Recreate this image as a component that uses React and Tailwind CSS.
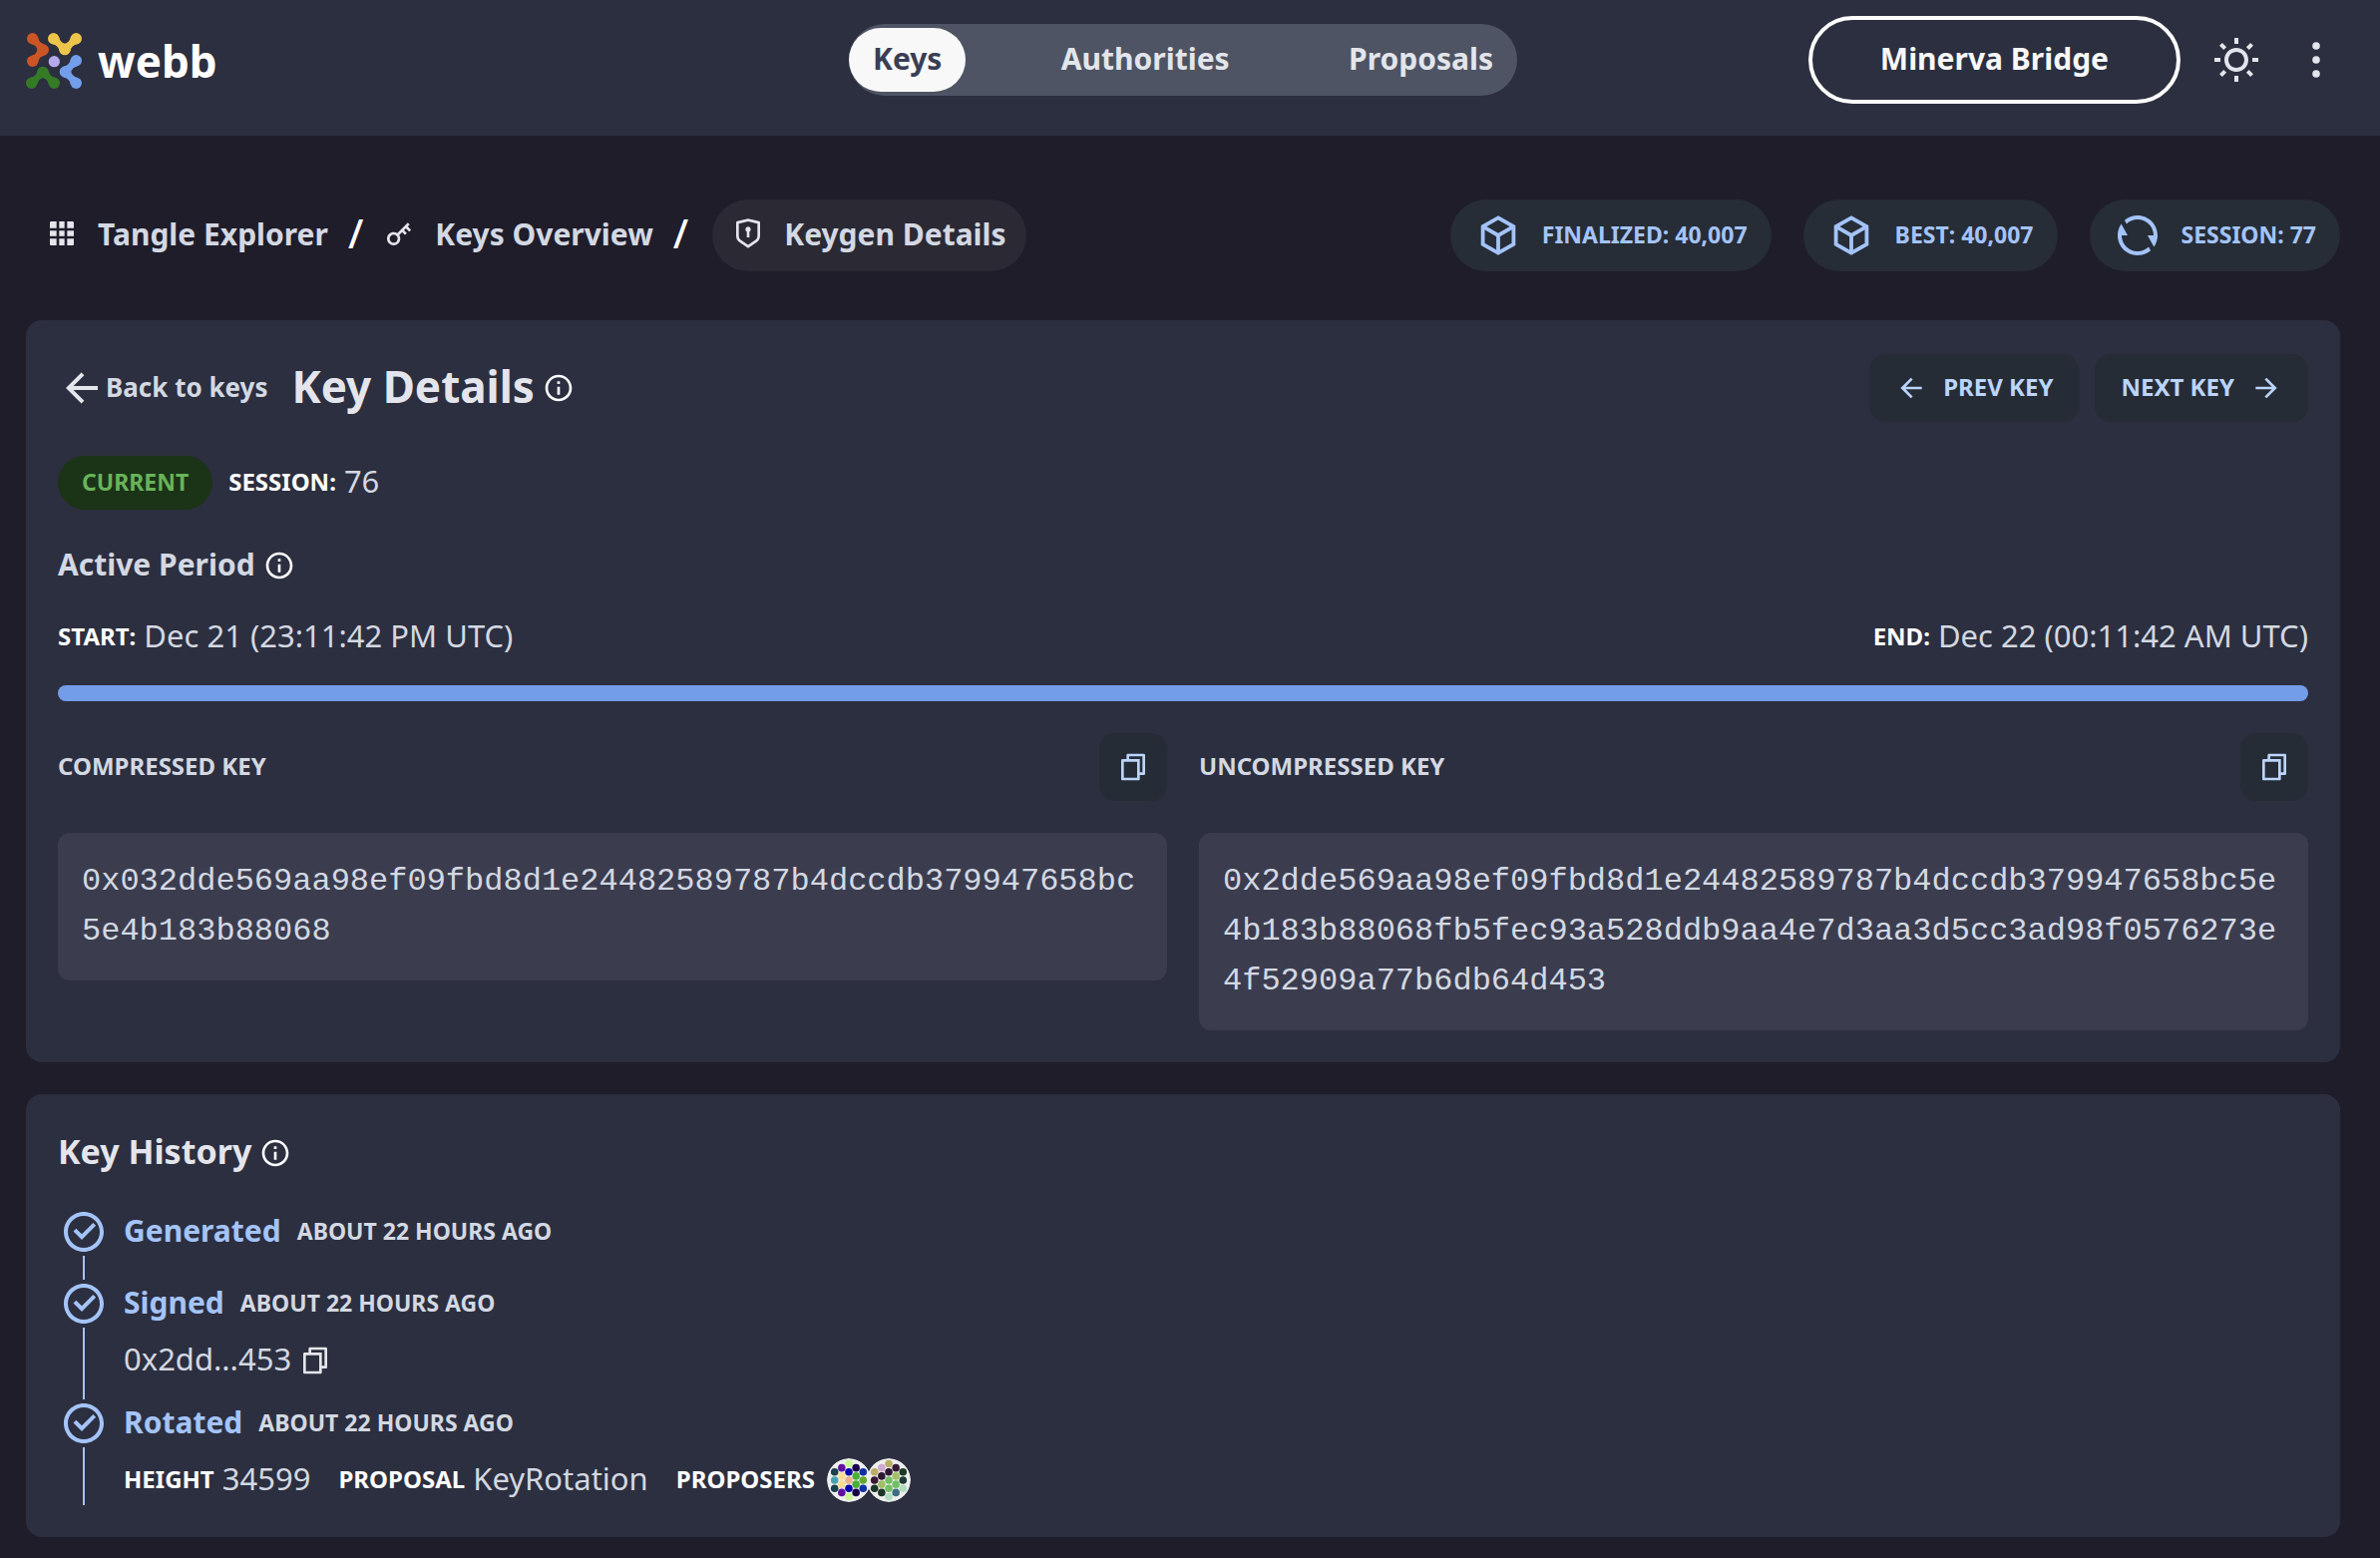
import React from "react";
import {
  RiGridFill,
  RiKey2Line,
  RiShieldKeyholeLine,
  RiRefreshLine,
  RiInformationLine,
  RiArrowLeftLine,
  RiArrowRightLine,
  RiFileCopyLine,
  RiCheckboxCircleLine,
  RiSunLine,
} from "react-icons/ri";

const COMPRESSED = "0x032dde569aa98ef09fbd8d1e24482589787b4dccdb379947658bc5e4b183b88068";
const UNCOMPRESSED =
  "0x2dde569aa98ef09fbd8d1e24482589787b4dccdb379947658bc5e4b183b88068fb5fec93a528ddb9aa4e7d3aa3d5cc3ad98f0576273e4f52909a77b6db64d453";

/* ---------- drawings ---------- */

function neck([ax, ay], [bx, by], r) {
  const d = Math.hypot(bx - ax, by - ay);
  const ux = (bx - ax) / d;
  const uy = (by - ay) / d;
  const nx = -uy;
  const ny = ux;
  const mx = (ax + bx) / 2;
  const my = (ay + by) / 2;
  const at = (x, y, u, n) => `${x + ux * u + nx * n} ${y + uy * u + ny * n}`;
  const u = r * 0.5;
  const n = r * 0.87;
  return `M${at(ax, ay, u, n)} Q${at(mx, my, 0, 4)} ${at(bx, by, -u, n)} L${at(bx, by, -u, -n)} Q${at(mx, my, 0, -4)} ${at(ax, ay, u, -n)} Z`;
}

const LOGO_BLOBS = [
  { fill: "#cc5526", points: [[20, 17], [52, 51], [20, 85]] },
  { fill: "#edc54b", points: [[83, 17], [117, 50], [151, 17]] },
  { fill: "#739ee9", points: [[151, 83], [118, 117], [151, 151]] },
  { fill: "#357b26", points: [[17, 151], [51, 118], [85, 151]] },
];

function LogoMark() {
  return (
    <svg viewBox="0 0 168 168" className="size-14" aria-hidden="true">
      {LOGO_BLOBS.map(({ fill, points }) => (
        <g key={fill} fill={fill}>
          {points.map(([x, y]) => (
            <circle key={`${x}-${y}`} cx={x} cy={y} r="17" />
          ))}
          <path d={neck(points[0], points[1], 17)} />
          <path d={neck(points[1], points[2], 17)} />
        </g>
      ))}
      <circle cx="85" cy="86" r="17" fill="#b5a9ec" />
    </svg>
  );
}

function CubeIcon() {
  return (
    <svg viewBox="0 0 24 24" className="size-12" fill="none" stroke="currentColor" strokeWidth="1.9" aria-hidden="true">
      <path d="M12 3.2 19.7 7.6v8.8L12 20.8 4.3 16.4V7.6Z" />
      <path d="M4.3 7.6 12 12l7.7-4.4M12 12v8.8" />
    </svg>
  );
}

function MoreIcon() {
  return (
    <svg viewBox="0 0 24 24" className="size-12" fill="currentColor" aria-hidden="true">
      <circle cx="12" cy="5" r="1.9" />
      <circle cx="12" cy="12" r="1.9" />
      <circle cx="12" cy="19" r="1.9" />
    </svg>
  );
}

const DOTS = [
  [32, 8], [32, 20], [21.6, 14], [11.2, 20], [21.6, 26], [11.2, 32], [11.2, 44],
  [21.6, 38], [21.6, 50], [32, 56], [32, 44], [42.4, 50], [52.8, 44], [42.4, 38],
  [52.8, 32], [52.8, 20], [42.4, 26], [42.4, 14], [32, 32],
];

const PROPOSERS = [
  ["#c8fb94", "#0606a8", "#5f12a2", "#1b414c", "#f8dc92", "#48a0b0", "#1b414c", "#f8dc92", "#5f12a2", "#c8fb94",
    "#0606a8", "#170047", "#1030a6", "#4bad3a", "#62a930", "#1030a6", "#4bad3a", "#170047", "#f0b08e"],
  ["#b9ae66", "#2d1733", "#d1a8d0", "#b9ae66", "#2d1733", "#361a33", "#1d3527", "#a1bf66", "#1d3527", "#b0dcc0",
    "#72bf64", "#406c82", "#b0dcc0", "#72bf64", "#1d3a35", "#1d3a27", "#a1bf66", "#361a33", "#72bf64"],
];

function Identicon({ colors }) {
  return (
    <svg viewBox="0 0 64 64" className="size-11 rounded-full" aria-hidden="true">
      <circle cx="32" cy="32" r="32" fill="#eeeeee" />
      {DOTS.map(([x, y], i) => (
        <circle key={i} cx={x} cy={y} r="5.5" fill={colors[i]} />
      ))}
    </svg>
  );
}

/* ---------- small parts ---------- */

function Info({ label }) {
  return (
    <button type="button" aria-label={label} className="text-white">
      <RiInformationLine className="size-8" />
    </button>
  );
}

function Field({ label, children }) {
  return (
    <p className="flex items-center gap-2">
      <span className="pb-0.5 text-2xl font-bold text-white">{label}</span>
      <span className="pb-1 text-[31px]">{children}</span>
    </p>
  );
}

function Crumb({ icon: Icon, children, current }) {
  return (
    <a
      href="#"
      aria-current={current ? "page" : undefined}
      className={`flex h-18 items-center gap-5 rounded-full px-5 ${current ? "ml-6 bg-[#2b2934]" : ""}`}
    >
      <Icon className="mb-1 size-8 text-[#e4e6ec]" />
      <span className="pb-1 text-[30px] font-bold">{children}</span>
    </a>
  );
}

function Slash() {
  return <span className="pb-1 text-[40px] leading-none font-medium text-white">/</span>;
}

function Chip({ icon, children }) {
  return (
    <div className="flex h-18 items-center gap-5 rounded-full bg-[#262d37] px-6 text-[23px] font-bold text-[#a4c4f9]">
      {icon}
      <span className="pb-0.5">{children}</span>
    </div>
  );
}

function KeyBlock({ title, value }) {
  return (
    <section>
      <div className="flex items-center justify-between">
        <h3 className="pb-0.5 text-2xl font-bold">{title}</h3>
        <button
          type="button"
          aria-label={`Copy ${title.toLowerCase()}`}
          className="flex size-17 items-center justify-center rounded-2xl bg-[#262c36] text-[#bbd5fd]"
        >
          <RiFileCopyLine className="size-8" />
        </button>
      </div>
      <p className="mt-8 rounded-xl bg-[#3b3d4f] p-6 font-['Liberation_Mono',monospace] text-[32px] leading-[50px] break-all">
        {value}
      </p>
    </section>
  );
}

function Step({ title, children }) {
  return (
    <li className="flex gap-4">
      <div className="flex w-12 flex-col items-center text-[#a4c4f9]">
        <RiCheckboxCircleLine className="size-12 shrink-0" />
        <span className="w-0.5 grow bg-current" />
      </div>
      <div>
        <div className="flex h-12 items-center gap-4">
          <h3 className="pb-1 text-[30px] font-bold text-[#a4c4f9]">{title}</h3>
          <time className="pb-0.5 text-[23px] font-bold">ABOUT 22 HOURS AGO</time>
        </div>
        {children}
      </div>
    </li>
  );
}

const TABS = ["Keys", "Authorities", "Proposals"];

/* ---------- page ---------- */

export default function App() {
  return (
    <div className="min-h-screen bg-[#1f1d2a] font-['Noto_Sans',sans-serif] text-[#d3d8e2]">
      <header className="grid grid-cols-[1fr_auto_1fr] items-center bg-[#2c2f3f] pt-4 pr-10 pb-8 pl-[26px]">
        <a href="#" className="flex items-center gap-4 justify-self-start pt-0.5">
          <LogoMark />
          <span className="text-[44px] leading-none font-bold text-white">webb</span>
        </a>

        <nav className="flex h-18 w-[670px] items-center justify-between rounded-full bg-[#4e5463] text-[30px] font-bold text-[#e2e5eb]">
          {TABS.map((tab, i) => (
            <a
              key={tab}
              href="#"
              aria-current={i === 0 ? "page" : undefined}
              className={`flex h-16 items-center rounded-full px-6 pb-1 ${i === 0 ? "bg-[#f7f8f7] text-[#3a3e53]" : ""}`}
            >
              {tab}
            </a>
          ))}
        </nav>

        <div className="flex items-center gap-8 justify-self-end text-[#e2e5eb]">
          <button
            type="button"
            className="h-22 rounded-full border-4 border-[#fbfcfb] px-17 pb-1 text-[30px] font-bold text-[#f7f8f7]"
          >
            Minerva Bridge
          </button>
          <button type="button" aria-label="Toggle theme">
            <RiSunLine className="size-12" />
          </button>
          <button type="button" aria-label="More options">
            <MoreIcon />
          </button>
        </div>
      </header>

      <main className="pt-16 pr-10 pb-5 pl-[26px]">
        <div className="flex items-center justify-between">
          <nav aria-label="Breadcrumb" className="flex items-center">
            <Crumb icon={RiGridFill}>Tangle Explorer</Crumb>
            <Slash />
            <Crumb icon={RiKey2Line}>Keys Overview</Crumb>
            <Slash />
            <Crumb icon={RiShieldKeyholeLine} current>
              Keygen Details
            </Crumb>
          </nav>
          <div className="flex gap-8">
            <Chip icon={<CubeIcon />}>FINALIZED: 40,007</Chip>
            <Chip icon={<CubeIcon />}>BEST: 40,007</Chip>
            <Chip icon={<RiRefreshLine className="size-12" />}>SESSION: 77</Chip>
          </div>
        </div>

        <section className="mt-[49px] rounded-2xl bg-[#2c2f3f] p-8">
          <div className="flex h-18 items-center justify-between">
            <div className="flex items-center gap-6">
              <a href="#" className="flex items-center">
                <RiArrowLeftLine className="size-12 text-[#e4e6ec]" />
                <span className="pb-0.5 text-[26px] font-bold">Back to keys</span>
              </a>
              <div className="flex items-center gap-2">
                <h1 className="pb-1 text-[44px] leading-none font-bold text-[#e4e5ec]">Key Details</h1>
                <Info label="About key details" />
              </div>
            </div>
            <div className="flex gap-4 text-2xl font-bold text-[#bbd5fd]">
              <button type="button" className="flex h-17 items-center gap-4 rounded-2xl bg-[#262c36] px-[26px]">
                <RiArrowLeftLine className="size-8" />
                <span className="pb-0.5">PREV KEY</span>
              </button>
              <button type="button" className="flex h-17 items-center gap-4 rounded-2xl bg-[#262c36] px-[26px]">
                <span className="pb-0.5">NEXT KEY</span>
                <RiArrowRightLine className="size-8" />
              </button>
            </div>
          </div>

          <div className="mt-8 flex h-[54px] items-center gap-4">
            <span className="flex h-full items-center rounded-full bg-[#1b3317] px-6 pb-0.5 text-[23px] font-bold text-[#68b45a]">
              CURRENT
            </span>
            <Field label="SESSION:">76</Field>
          </div>

          <div className="mt-8 flex h-12 items-center gap-2">
            <h2 className="pb-1 text-[30px] font-bold">Active Period</h2>
            <Info label="About the active period" />
          </div>

          <div className="mt-6 flex h-12 items-center justify-between">
            <Field label="START:">Dec 21 (23:11:42 PM UTC)</Field>
            <Field label="END:">Dec 22 (00:11:42 AM UTC)</Field>
          </div>

          <div
            role="progressbar"
            aria-label="Active period"
            aria-valuenow={100}
            aria-valuemin={0}
            aria-valuemax={100}
            className="mt-6 h-4 rounded-full bg-[#739de8]"
          />

          <div className="mt-8 grid grid-cols-2 items-start gap-8">
            <KeyBlock title="COMPRESSED KEY" value={COMPRESSED} />
            <KeyBlock title="UNCOMPRESSED KEY" value={UNCOMPRESSED} />
          </div>
        </section>

        <section className="mt-8 rounded-2xl bg-[#2c2f3f] p-8">
          <div className="flex h-[54px] items-center gap-2">
            <h2 className="pb-1 text-[34px] font-bold text-[#e4e5ec]">Key History</h2>
            <Info label="About key history" />
          </div>

          <ol className="mt-7 pl-0.5">
            <Step title="Generated">
              <div className="h-6" />
            </Step>
            <Step title="Signed">
              <div className="mt-2 mb-3.5 flex h-[50px] items-center gap-2">
                <span className="pb-1 text-[31px]">0x2dd...453</span>
                <button type="button" aria-label="Copy key" className="text-[#e4e6ec]">
                  <RiFileCopyLine className="size-8" />
                </button>
              </div>
            </Step>
            <Step title="Rotated">
              <div className="mt-2 flex h-[50px] items-center gap-7">
                <Field label="HEIGHT">34599</Field>
                <Field label="PROPOSAL">KeyRotation</Field>
                <div className="flex items-center gap-3">
                  <span className="pb-0.5 text-2xl font-bold text-white">PROPOSERS</span>
                  <div className="flex -space-x-1">
                    {PROPOSERS.map((colors, i) => (
                      <Identicon key={i} colors={colors} />
                    ))}
                  </div>
                </div>
              </div>
            </Step>
          </ol>
        </section>
      </main>
    </div>
  );
}
